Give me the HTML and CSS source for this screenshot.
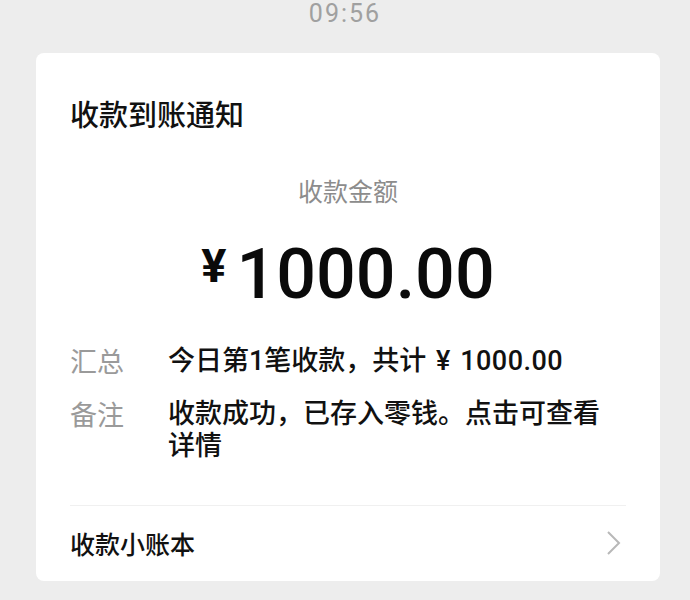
FILE: index.html
```html
<!DOCTYPE html>
<html lang="zh-CN">
<head>
    <meta charset="UTF-8" />
    <title>收款到账通知</title>
    <meta name="viewport" content="width=device-width, initial-scale=1.0" />
    <link rel="stylesheet" href="styles.css">
</head>
<body>

    <!-- time stamp -->
    <div class="time">09:56</div>

    <!-- notification card -->
    <div class="card">
        <h2 class="card-title">收款到账通知</h2>

        <div class="amount-label">收款金额</div>
        <div class="amount"><span class="yen">¥</span>1000.00</div>

        <div class="rows">
            <div class="row">
                <span class="row-label">汇总</span>
                <span class="row-value">今日第1笔收款，共计 ¥ <span class="num">1000.00</span></span>
            </div>
            <div class="row">
                <span class="row-label">备注</span>
                <span class="row-value">收款成功，已存入零钱。点击可查看详情</span>
            </div>
        </div>

        <a class="footer" href="#">
            <span>收款小账本</span>
            <svg class="chevron" width="16" height="26" viewBox="0 0 16 26">
                <polyline points="2,2 13,13 2,24" fill="none" stroke="#b8b8b8" stroke-width="2" />
            </svg>
        </a>
    </div>

</body>
</html>
```

FILE: styles.css
```css
/* --- Page --- */
body {
    margin: 0;
    background: #ededed;
    font-family: "Noto Sans CJK SC", "Noto Sans", sans-serif;
    color: #111;
}

.time {
    height: 28px;
    line-height: 28px;
    text-align: center;
    font-family: Roboto, "Noto Sans", sans-serif;
    font-size: 25px;
    letter-spacing: 2px;
    color: #a0a0a0;
}

/* --- Card --- */
.card {
    width: 624px;
    margin: 25px 0 0 36px;
    padding: 40px 34px 0 34px;
    box-sizing: border-box;
    background: #fff;
    border-radius: 8px;
}

.card-title {
    margin: 0;
    font-size: 29px;
    line-height: 40px;
    font-weight: 500;
    color: #111;
}

.amount-label {
    margin-top: 39px;
    text-align: center;
    font-size: 25px;
    line-height: 36px;
    color: #8c8c8c;
}

.amount {
    margin-top: 18px;
    text-align: center;
    font-family: Roboto, "Noto Sans", sans-serif;
    font-size: 70px;
    line-height: 80px;
    font-weight: 500;
    color: #0a0a0a;
}

.amount .yen {
    font-size: 47px;
    font-weight: 700;
    vertical-align: 16px;
    margin-right: 10px;
}

/* --- Detail rows --- */
.rows {
    margin-top: 31px;
    display: flex;
    flex-direction: column;
    gap: 21px;
}

.row {
    display: flex;
    font-size: 27px;
    line-height: 32px;
}

.row-label {
    width: 98px;
    flex-shrink: 0;
    color: #9a9a9a;
}

.row-value {
    max-width: 448px;
    font-family: Roboto, "Noto Sans CJK SC", sans-serif;
    font-weight: 500;
    word-spacing: 3px;
    color: #111;
}

.row-value .num {
    letter-spacing: 0.5px;
}

/* --- Footer --- */
.footer {
    margin-top: 43px;
    height: 76px;
    padding-bottom: 2px;
    box-sizing: border-box;
    border-top: 1px solid #f0f0f0;
    display: flex;
    align-items: center;
    justify-content: space-between;
    text-decoration: none;
    color: #111;
    font-size: 25px;
    font-weight: 500;
}

.chevron {
    margin-right: 4px;
}
```
